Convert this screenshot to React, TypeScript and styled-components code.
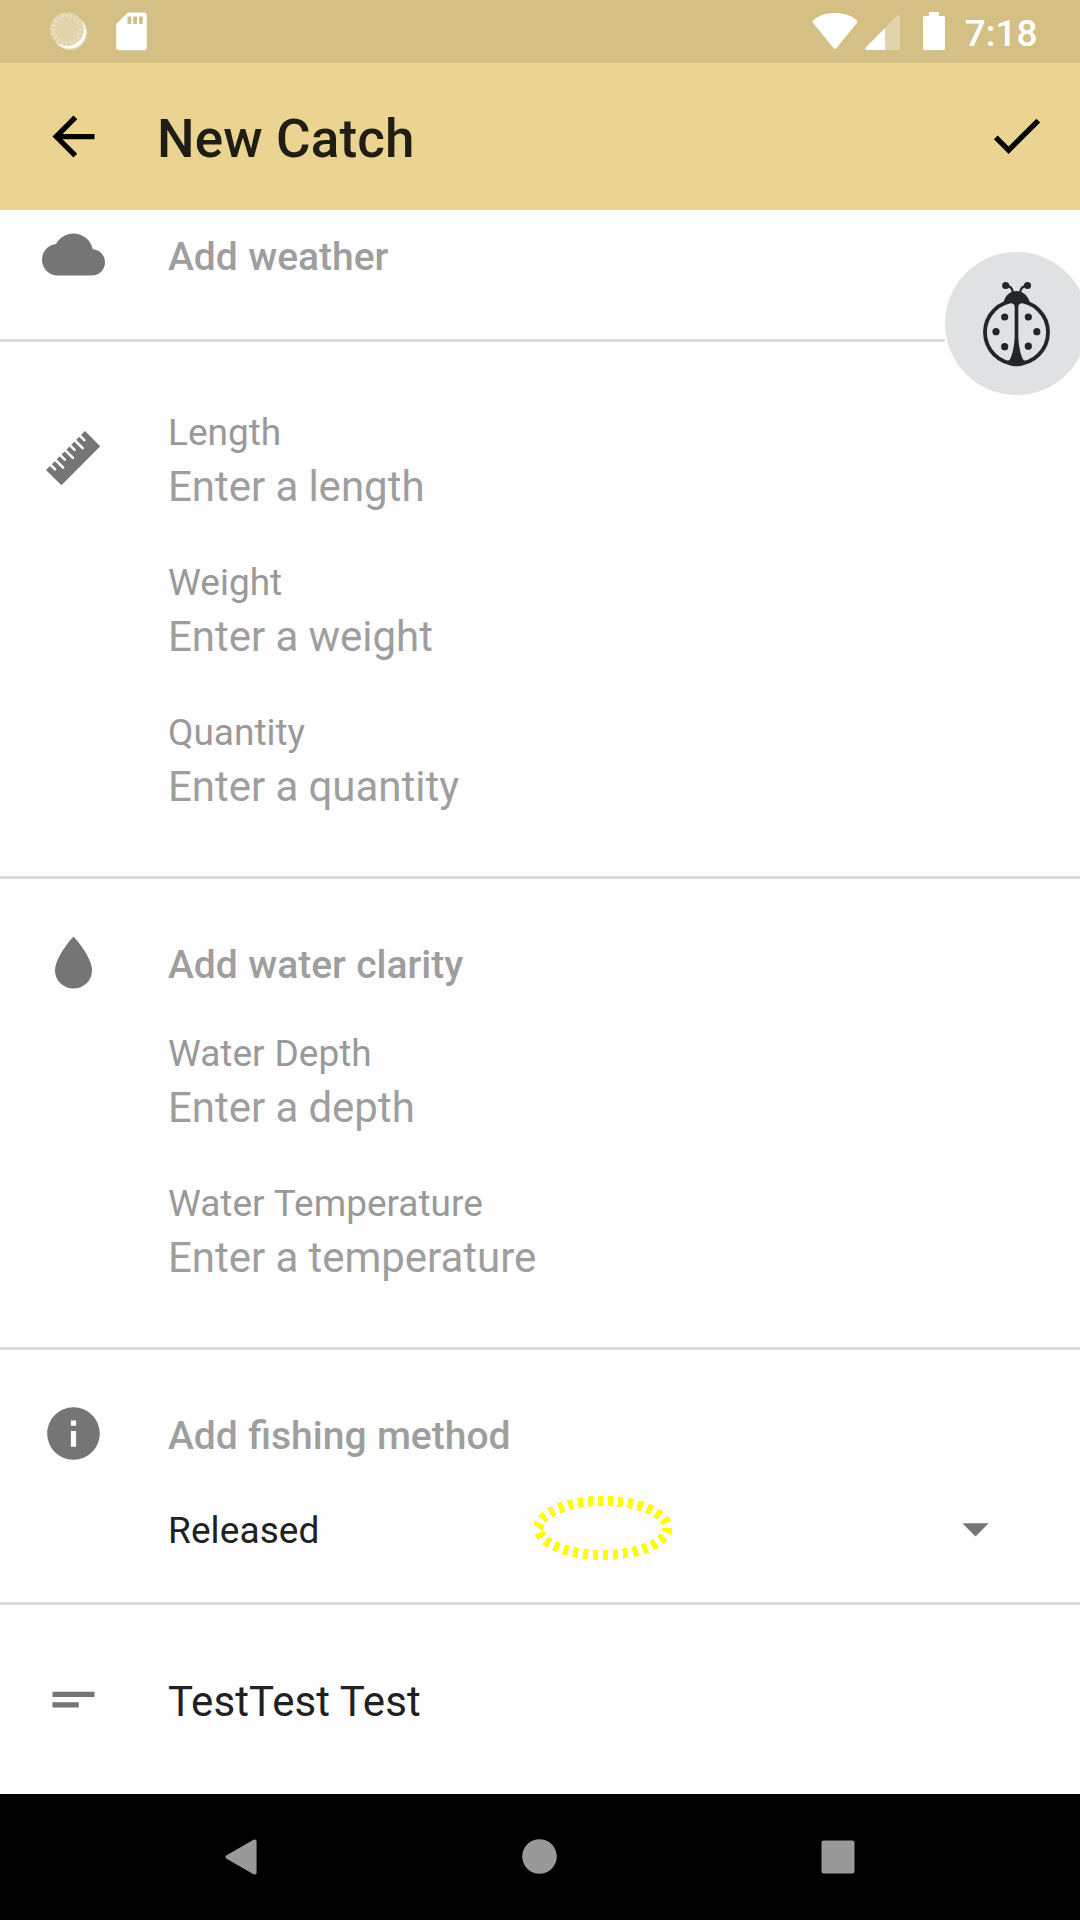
import React from "react";
import styled, { createGlobalStyle } from "styled-components";

const GlobalStyle = createGlobalStyle`
  html, body { margin: 0; padding: 0; background: #fefefe; }
  * { box-sizing: border-box; }
`;

const Screen = styled.div`
  position: relative;
  display: flex;
  flex-direction: column;
  width: 1080px;
  height: 1920px;
  overflow: hidden;
  background: #fefefe;
  font-family: Roboto, "Liberation Sans", sans-serif;
  color: #212121;
`;

const StatusBar = styled.header`
  display: flex;
  align-items: flex-start;
  justify-content: space-between;
  flex: none;
  height: 63px;
  padding: 12px 42.5px 0 50px;
  background: #d4c084;
`;

const StatusGroup = styled.div`
  display: flex;
  align-items: flex-start;
`;

const Glyph = styled.svg<{ $gap?: number }>`
  display: block;
  flex: none;
  margin-left: ${(p) => p.$gap ?? 0}px;
`;

const Clock = styled.time`
  margin-left: 20px;
  font-size: 37px;
  font-weight: 500;
  line-height: 43px;
  color: #fff;
`;

const AppBar = styled.nav`
  display: flex;
  align-items: center;
  flex: none;
  height: 147px;
  padding: 0 32px 0 42px;
  background: #ebd392;
`;

const BarButton = styled.button<{ $raise?: number }>`
  display: block;
  padding: 0;
  margin-bottom: ${(p) => p.$raise ?? 0}px;
  border: 0;
  background: none;
  svg { display: block; }
`;

const Title = styled.h1`
  flex: 1;
  margin: 0 0 0 52px;
  padding-top: 5px;
  font-size: 53px;
  font-weight: 500;
  line-height: 62px;
  letter-spacing: 0.12px;
  color: #201d14;
`;

const Form = styled.main`
  display: flex;
  flex-direction: column;
  flex: 1;
`;

const Section = styled.section<{ $height: number }>`
  display: grid;
  grid-template-columns: 147px 1fr;
  flex: none;
  height: ${(p) => p.$height}px;
  border-bottom: 3px solid #dcdcdc;
  &:last-child { border-bottom: 0; }
`;

const IconCell = styled.div<{ $top: number }>`
  display: flex;
  justify-content: center;
  align-items: flex-start;
  padding-top: ${(p) => p.$top}px;
  svg { display: block; }
`;

const Content = styled.div<{ $top: number }>`
  display: flex;
  flex-direction: column;
  padding: ${(p) => p.$top}px 0 0 21px;
`;

const AddLink = styled.div<{ $after?: number }>`
  margin-bottom: ${(p) => p.$after ?? 0}px;
  font-size: 39px;
  font-weight: 500;
  line-height: 52px;
  word-spacing: 0.7px;
  color: #9e9e9e;
`;

const FieldBox = styled.div`
  display: flex;
  flex-direction: column;
  height: 150px;
`;

const Label = styled.div`
  font-size: 37px;
  line-height: 48px;
  word-spacing: 0.7px;
  color: #999;
`;

const Value = styled.div<{ $filled?: boolean }>`
  font-size: 42px;
  line-height: 60px;
  letter-spacing: ${(p) => (p.$filled ? "0.08px" : "0")};
  word-spacing: ${(p) => (p.$filled ? "0" : "-0.3px")};
  color: ${(p) => (p.$filled ? "#212121" : "#9e9e9e")};
`;

const SelectRow = styled.div`
  display: flex;
  align-items: center;
  justify-content: space-between;
  height: 48px;
  padding-right: 73px;
  font-size: 37px;
  line-height: 48px;
  letter-spacing: 0.1px;
  svg {
    display: block;
    margin-bottom: 5px;
  }
`;

const NavBar = styled.footer`
  display: flex;
  align-items: center;
  justify-content: space-between;
  flex: none;
  height: 126px;
  padding: 0 225px;
  background: #000;
  svg { display: block; }
`;

const BugButton = styled.div`
  position: absolute;
  left: 945px;
  top: 252px;
  width: 143px;
  height: 143px;
  background: #fefefe;
  svg { display: block; }
`;

const TapMarker = styled.svg`
  position: absolute;
  left: 532px;
  top: 1494px;
`;

const MaterialIcon = ({ d, size = 63, fill = "#757575" }: { d: string; size?: number; fill?: string }) => (
  <svg width={size} height={size} viewBox="0 0 24 24" fill={fill}>
    <path d={d} />
  </svg>
);

const RulerIcon = () => (
  <svg width="55" height="55" viewBox="0 0 55 55">
    <path d="M0 39L39 0L54.2 15.3L15.4 54.3Z" fill="#757575" />
    {[1, 2, 3, 4, 5, 6, 7].map((i) => {
      const x = (i * 39) / 8;
      const y = 39 - x;
      const d = i % 2 ? 4.2 : 7.4;
      return (
        <line key={i} x1={x - 2} y1={y - 2} x2={x + d} y2={y + d} stroke="#fefefe" strokeWidth="2.6" strokeLinecap="round" />
      );
    })}
  </svg>
);

const SyncIcon = () => (
  <Glyph width="38" height="39" viewBox="0 0 38 39">
    <circle cx="20" cy="20.7" r="17.3" fill="#e6dcb9" />
    <circle cx="19.2" cy="19.8" r="16.7" fill="#fff" />
    <circle cx="16.9" cy="17.2" r="16.9" fill="#e1d4ab" />
    {Array.from({ length: 20 }, (_, i) => {
      const a = (i * Math.PI) / 10;
      return (
        <line
          key={i}
          x1={16.6 + 11.5 * Math.cos(a)}
          y1={17.5 + 11.5 * Math.sin(a)}
          x2={16.6 + 15.8 * Math.cos(a)}
          y2={17.5 + 15.8 * Math.sin(a)}
          stroke="#ebe2c5"
          strokeWidth="1.6"
        />
      );
    })}
  </Glyph>
);

const LadybugIcon = () => (
  <svg width="143" height="143" viewBox="135 96 429 429" fill="#242528">
    <circle cx="349.5" cy="310.5" r="214.5" fill="#e0e1e3" />
    <circle cx="349.5" cy="337" r="94.5" fill="none" stroke="#242528" strokeWidth="11.5" />
    <path d="M311 246C316 226 331 213 349.5 213C368 213 383 226 389 246C377 245 366 247 358 253C355 256 355 260 355 264V350C356 376 361 402 369 418C373 424 378 424 385 422L372 434C357 440 342 440 327 434L314 422C321 424 326 424 330 418C338 402 343 376 344 350V264C344 260 344 256 341 253C333 247 322 245 311 246Z" />
    <path d="M318 197Q337 199 338.5 217M382 197Q362 199 360.5 217" fill="none" stroke="#242528" strokeWidth="6.5" />
    {[
      [317, 196.5], [382.5, 196.5], [314, 291], [385, 291], [288, 335], [410.5, 335], [314, 380], [385, 378.5],
    ].map(([x, y]) => (
      <circle key={`${x}-${y}`} cx={x} cy={y} r="10.8" />
    ))}
  </svg>
);

const Field = ({ label, hint }: { label: string; hint: string }) => (
  <FieldBox>
    <Label>{label}</Label>
    <Value>{hint}</Value>
  </FieldBox>
);

export default function App() {
  return (
    <>
      <GlobalStyle />
      <Screen>
        <StatusBar>
          <StatusGroup>
            <SyncIcon />
            <Glyph $gap={28} width="31" height="39" viewBox="0 0 31 39">
              <path
                d="M12 0.5H27.5Q30.7 0.5 30.7 3.7V35Q30.7 38.2 27.5 38.2H3.3Q0.2 38.2 0.2 35V12Z M11.5 4.5V12H15.3V4.5Z M17.2 4.5V12H21V4.5Z M23 4.5V12H26.8V4.5Z"
                fill="#fff"
                fillRule="evenodd"
              />
            </Glyph>
          </StatusGroup>
          <StatusGroup>
            <Glyph width="46" height="39" viewBox="0 0 46 39">
              <path d="M1.3 8.2C7 3 14.5 1 23 1S39 3 44.7 8.2Q46 9.5 44.9 11L24.3 36.3Q23 37.8 21.7 36.3L1.1 11Q0 9.5 1.3 8.2Z" fill="#fff" />
            </Glyph>
            <Glyph $gap={7} width="35" height="39" viewBox="0 0 35 39">
              <path d="M32.6 3.3Q35 1.5 35 4.5V36Q35 38 33 38H20V16Z" fill="#e1d4ad" />
              <path d="M20 16V38H1.5Q-0.8 38 0.7 35.5Z" fill="#fff" />
            </Glyph>
            <Glyph $gap={23} width="22" height="38" viewBox="0 0 22 38">
              <path d="M6 0H16V4H20.5Q22 4 22 5.5V36.5Q22 38 20.5 38H1.5Q0 38 0 36.5V5.5Q0 4 1.5 4H6Z" fill="#fff" />
            </Glyph>
            <Clock>7:18</Clock>
          </StatusGroup>
        </StatusBar>

        <AppBar>
          <BarButton aria-label="Back">
            <MaterialIcon fill="#000" d="M20 11H7.83l5.59-5.59L12 4l-8 8 8 8 1.41-1.41L7.83 13H20v-2z" />
          </BarButton>
          <Title>New Catch</Title>
          <BarButton aria-label="Save" $raise={2}>
            <MaterialIcon fill="#000" d="M9 16.17L4.83 12l-1.42 1.41L9 19 21 7l-1.41-1.41z" />
          </BarButton>
        </AppBar>

        <Form>
          <Section $height={132}>
            <IconCell $top={13}>
              <MaterialIcon d="M19.35 10.04C18.67 6.59 15.64 4 12 4 9.11 4 6.6 5.64 5.35 8.04 2.34 8.36 0 10.91 0 14c0 3.31 2.69 6 6 6h13c2.76 0 5-2.24 5-5 0-2.64-2.05-4.78-4.65-4.96z" />
            </IconCell>
            <Content $top={21}>
              <AddLink>Add weather</AddLink>
            </Content>
          </Section>

          <Section $height={537}>
            <IconCell $top={89}>
              <RulerIcon />
            </IconCell>
            <Content $top={67}>
              <Field label="Length" hint="Enter a length" />
              <Field label="Weight" hint="Enter a weight" />
              <Field label="Quantity" hint="Enter a quantity" />
            </Content>
          </Section>

          <Section $height={471}>
            <IconCell $top={57}>
              <svg width="37" height="53" viewBox="0 0 37 53">
                <path d="M18.5 0.5C18.5 0.5 37 20.5 37 34.5A18.5 18 0 0 1 0 34.5C0 20.5 18.5 0.5 18.5 0.5Z" fill="#757575" />
              </svg>
            </IconCell>
            <Content $top={60}>
              <AddLink $after={39}>Add water clarity</AddLink>
              <Field label="Water Depth" hint="Enter a depth" />
              <Field label="Water Temperature" hint="Enter a temperature" />
            </Content>
          </Section>

          <Section $height={255}>
            <IconCell $top={52}>
              <MaterialIcon d="M12 2C6.48 2 2 6.48 2 12s4.48 10 10 10 10-4.48 10-10S17.52 2 12 2zm1 15h-2v-6h2v6zm0-8h-2V7h2v2z" />
            </IconCell>
            <Content $top={60}>
              <AddLink $after={45}>Add fishing method</AddLink>
              <SelectRow>
                Released
                <MaterialIcon d="M7 10l5 5 5-5z" />
              </SelectRow>
            </Content>
          </Section>

          <Section $height={189}>
            <IconCell $top={63}>
              <MaterialIcon d="M4 9h16v2H4V9zm0 4h10v2H4v-2z" />
            </IconCell>
            <Content $top={67}>
              <Value $filled>TestTest Test</Value>
            </Content>
          </Section>
        </Form>

        <NavBar>
          <svg width="32" height="36" viewBox="0 0 32 36">
            <path d="M28.5 0.8Q31.6 -0.5 31.6 2.8V33.2Q31.6 36.5 28.5 35.2L1.2 19.5Q-0.5 18 1.2 16.5Z" fill="#999" />
          </svg>
          <svg width="36" height="36" viewBox="0 0 36 36">
            <circle cx="18.5" cy="17.5" r="17.3" fill="#999" />
          </svg>
          <svg width="34" height="34" viewBox="0 0 34 34">
            <rect x="0.5" y="0.5" width="33" height="33" rx="2" fill="#999" />
          </svg>
        </NavBar>

        <BugButton>
          <LadybugIcon />
        </BugButton>
        <TapMarker width="142" height="68" viewBox="0 0 142 68">
          <ellipse
            cx="71"
            cy="34"
            rx="64.5"
            ry="27"
            fill="none"
            stroke="#ff0"
            strokeWidth="10"
            pathLength="300"
            strokeDasharray="5 5"
            shapeRendering="crispEdges"
          />
        </TapMarker>
      </Screen>
    </>
  );
}
